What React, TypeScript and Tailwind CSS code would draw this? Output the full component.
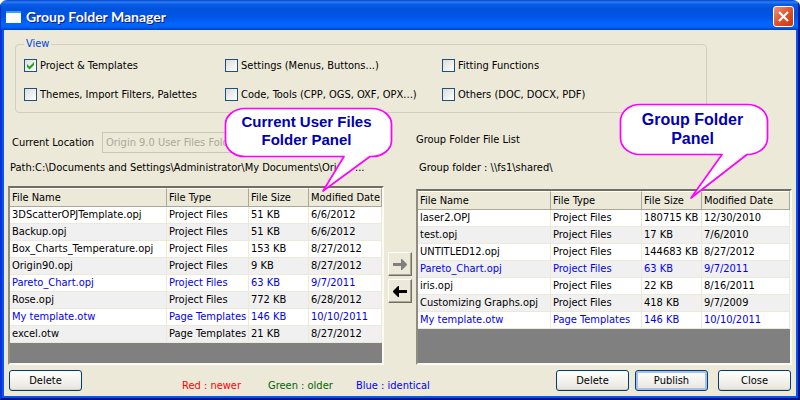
import React from "react";

type FileRow = { name: string; type: string; size: string; date: string; same?: boolean };

const P = "Project Files";
const T = "Page Templates";

const userFiles: FileRow[] = [
  { name: "3DScatterOPJTemplate.opj", type: P, size: "51 KB", date: "6/6/2012" },
  { name: "Backup.opj", type: P, size: "51 KB", date: "6/6/2012" },
  { name: "Box_Charts_Temperature.opj", type: P, size: "153 KB", date: "8/27/2012" },
  { name: "Origin90.opj", type: P, size: "9 KB", date: "8/27/2012" },
  { name: "Pareto_Chart.opj", type: P, size: "63 KB", date: "9/7/2011", same: true },
  { name: "Rose.opj", type: P, size: "772 KB", date: "6/28/2012" },
  { name: "My template.otw", type: T, size: "146 KB", date: "10/10/2011", same: true },
  { name: "excel.otw", type: T, size: "21 KB", date: "8/27/2012" },
];

const groupFiles: FileRow[] = [
  { name: "laser2.OPJ", type: P, size: "180715 KB", date: "12/30/2010" },
  { name: "test.opj", type: P, size: "17 KB", date: "7/6/2010" },
  { name: "UNTITLED12.opj", type: P, size: "144683 KB", date: "8/27/2012" },
  { name: "Pareto_Chart.opj", type: P, size: "63 KB", date: "9/7/2011", same: true },
  { name: "iris.opj", type: P, size: "22 KB", date: "8/16/2011" },
  { name: "Customizing Graphs.opj", type: P, size: "418 KB", date: "9/7/2009" },
  { name: "My template.otw", type: T, size: "146 KB", date: "10/10/2011", same: true },
];

const filters = [
  "Project & Templates",
  "Settings (Menus, Buttons...)",
  "Fitting Functions",
  "Themes, Import Filters, Palettes",
  "Code, Tools (CPP, OGS, OXF, OPX...)",
  "Others (DOC, DOCX, PDF)",
];

function Filter({ label, checked }: { label: string; checked: boolean }) {
  return (
    <label className="flex h-[13px] items-center gap-[3px] leading-4 whitespace-nowrap">
      <span className="relative size-[13px] shrink-0">
        <input
          type="checkbox"
          defaultChecked={checked}
          className="peer block size-[13px] appearance-none border border-[#1c5180] bg-linear-to-br from-[#dcdcd7] to-white"
        />
        <svg viewBox="0 0 13 13" className="pointer-events-none absolute inset-0 hidden size-[13px] peer-checked:block">
          <path d="M3 5v3l2.500 2.500L10 6V3L5.500 7.500z" fill="#21a121" />
        </svg>
      </span>
      {label}
    </label>
  );
}

function FileTable({ rows, cols, label }: { rows: FileRow[]; cols: string[]; label: string }) {
  const heads = ["File Name", "File Type", "File Size", "Modified Date"];
  return (
    <div className="flex-1 overflow-hidden border-2 border-t-[#716f64] border-r-[#fbfaf5] border-b-[#fbfaf5] border-l-[#8f8d80] bg-[#808080]">
      <table aria-label={label} className="w-full table-fixed border-separate border-spacing-0">
        <colgroup>
          {cols.map((c, i) => (
            <col key={i} className={c} />
          ))}
        </colgroup>
        <thead>
          <tr className="h-[19px] bg-[#ece9d8]">
            {heads.map((h) => (
              <th
                key={h}
                className="border-t border-r border-b border-t-white border-r-[#aca899] border-b-[#aca899] p-0 pl-[2px] text-left font-normal whitespace-nowrap"
              >
                {h}
              </th>
            ))}
          </tr>
        </thead>
        <tbody>
          {rows.map((r) => (
            <tr key={r.name} className={`h-[17px] odd:bg-white even:bg-[#f0f0f0] ${r.same ? "text-[#0000f0]" : "text-black"}`}>
              {[r.name, r.type, r.size, r.date].map((v, i) => (
                <td key={i} className="border-r border-b border-[#ece9d8] p-0 pl-[2px] leading-4 whitespace-nowrap">
                  {v}
                </td>
              ))}
            </tr>
          ))}
        </tbody>
      </table>
    </div>
  );
}

function PushButton({ children, primary }: { children: string; primary?: boolean }) {
  return (
    <button
      className={`h-[21px] w-[73px] rounded-[3px] border border-[#003c74] bg-linear-to-b from-white via-[#f4f3ee] to-[#e6e3da] pt-px text-center ${
        primary ? "shadow-[inset_0_0_0_2px_#a6c0ee]" : "shadow-[inset_0_-1px_0_#d6d0c5]"
      }`}
    >
      {children}
    </button>
  );
}

function MoveButton({ label, disabled }: { label: string; disabled?: boolean }) {
  return (
    <button
      aria-label={label}
      disabled={disabled}
      className="flex size-6 items-center justify-center border border-t-white border-r-[#716f64] border-b-[#716f64] border-l-white bg-[#ece9d8] shadow-[inset_-1px_-1px_0_#aca899]"
    >
      <svg viewBox="0 0 14 11" className={disabled ? "h-[11px] w-3.5" : "h-[11px] w-3.5 rotate-180"}>
        <path d="M0 4h8V0h1l5 5v1l-5 5H8V7H0z" fill={disabled ? "#808080" : "#000"} />
      </svg>
    </button>
  );
}

function Callout({ lines, place, body, d }: { lines: string[]; place: string; body: string; d: string }) {
  return (
    <div className={`pointer-events-none absolute ${place}`}>
      <svg className="absolute top-0 left-0 h-[100px] w-[170px] overflow-visible">
        <path d={d} fill="#fff" stroke="#ff00ff" strokeWidth="1.7" strokeLinejoin="round" />
      </svg>
      <div className={`relative text-center font-['Liberation_Sans',Arial,sans-serif] font-bold text-[#0000b4] ${body}`}>
        {lines.map((l) => (
          <div key={l}>{l}</div>
        ))}
      </div>
    </div>
  );
}

export default function App() {
  return (
    <div className="bg-white">
      <div className="relative flex min-h-screen flex-col overflow-hidden rounded-t-[7px] bg-[#ece9d8] font-['DejaVu_Sans_Condensed','DejaVu_Sans',sans-serif] text-[11px] leading-[14px] text-black">
        <header className="flex h-[30px] items-center justify-between bg-[linear-gradient(180deg,#0842c8_0%,#2a80f5_7%,#0a5ce8_14%,#0053dd_28%,#0055e5_55%,#0066ff_80%,#0062f5_90%,#003fc4_100%)] pt-[3px] pr-[6px] pl-[6px] shadow-[inset_1px_0_0_#0831c0,inset_-2px_0_0_#001ea0]">
          <div className="flex items-center gap-[5px]">
            <span className="h-[12px] w-[15px] border-t-2 border-t-[#3f9cf5] bg-[#fdfdf5]" />
            <h1 className="font-['Lato','Noto_Sans',sans-serif] text-[14px] leading-4 font-bold text-white [text-shadow:1px_1px_0_#0a1883]">
              Group Folder Manager
            </h1>
          </div>
          <button
            aria-label="Close window"
            className="flex size-[21px] items-center justify-center rounded-[3px] border border-white bg-linear-to-br from-[#eb9378] via-[#e0502c] to-[#c23a0c]"
          >
            <svg viewBox="0 0 11 11" className="size-[11px]">
              <path d="M1 1l9 9M10 1l-9 9" stroke="#fff" strokeWidth="2.2" />
            </svg>
          </button>
        </header>

        <div className="flex flex-1 flex-col border-r-2 border-b-2 border-l-2 border-r-[#00138c] border-b-[#00138c] border-l-[#0831d9]">
          <main className="flex flex-1 flex-col border-r-2 border-b-2 border-l-2 border-[#0855ee] px-1 pt-[7px] pb-[5px]">
            <fieldset className="mr-[85px] ml-[7px] rounded-[4px] border border-[#d0d0bf] px-2 pb-[11px]">
              <legend className="px-[2px] text-[#0046d5]">View</legend>
              <div className="grid grid-cols-[201px_217px_1fr] gap-y-4 pt-2">
                {filters.map((f, i) => (
                  <Filter key={f} label={f} checked={i === 0} />
                ))}
              </div>
            </fieldset>

            <div className="mt-[19px] grid flex-1 grid-cols-[minmax(0,1fr)_24px_minmax(0,1fr)] gap-1">
              <section className="flex flex-col">
                <div className="flex h-[21px] items-center">
                  <label htmlFor="location" className="w-[94px] shrink-0 pl-1 leading-4 whitespace-nowrap">
                    Current Location
                  </label>
                  <select
                    id="location"
                    disabled
                    className="h-[21px] min-w-0 flex-1 appearance-none border border-[#c9c7ba] bg-[#ece9d8] px-[3px] text-[#aca899] opacity-100"
                  >
                    <option>Origin 9.0 User Files Folder</option>
                  </select>
                </div>
                <p className="mt-2 mb-[11px] pl-[2px] whitespace-nowrap">
                  Path:C:\Documents and Settings\Administrator\My Documents\Origin ...
                </p>
                <FileTable label="Current user files" rows={userFiles} cols={["w-[157px]", "w-[82px]", "w-[60px]", ""]} />
              </section>

              <div className="flex flex-col gap-[3px] pt-[120px]">
                <MoveButton label="Copy to group folder" disabled />
                <MoveButton label="Copy to user files" />
              </div>

              <section className="flex flex-col">
                <h2 className="pt-px">Group Folder File List</h2>
                <p className="mt-[14px] mb-[14px] pl-[3px]">Group folder : \\fs1\shared\</p>
                <FileTable label="Group folder files" rows={groupFiles} cols={["w-[133px]", "w-[91px]", "w-[60px]", ""]} />
              </section>
            </div>

            <footer className="mt-[5px] flex justify-between px-px">
              <div className="flex">
                <PushButton>Delete</PushButton>
                <div className="ml-[100px] flex pt-[9px] leading-[14px]">
                  <span className="h-3 w-[86px] text-[#ff0000]">Red : newer</span>
                  <span className="h-3 w-[88px] text-[#006400]">Green : older</span>
                  <span className="h-3 text-[#0000ff]">Blue : identical</span>
                </div>
              </div>
              <div className="flex gap-[6px]">
                <PushButton>Delete</PushButton>
                <PushButton primary>Publish</PushButton>
                <span className="ml-1 flex">
                  <PushButton>Close</PushButton>
                </span>
              </div>
            </footer>
          </main>
        </div>

        <Callout
          place="top-[108px] left-[225px]"
          body="w-[163px] pt-[5px] text-[15px] leading-[18px]"
          lines={["Current User Files", "Folder Panel"]}
          d="M20 .5H147C158 .5 166.500 8 166.500 16V33C166.500 41 158 48.500 147 48.500H145L98 83L119 48.500H20C9 48.500 .5 41 .5 33V16C.5 8 9 .5 20 .5z"
        />
        <Callout
          place="top-[104px] left-[620px]"
          body="w-[145px] pt-[6px] text-[16px] leading-[19px]"
          lines={["Group Folder", "Panel"]}
          d="M20 .5H127C139 .5 147.500 8 147.500 17V34C147.500 43 139 50.500 127 50.500L71 94L102 50.500H20C9 50.500 .5 43 .5 34V17C.5 8 9 .5 20 .5z"
        />
      </div>
    </div>
  );
}
